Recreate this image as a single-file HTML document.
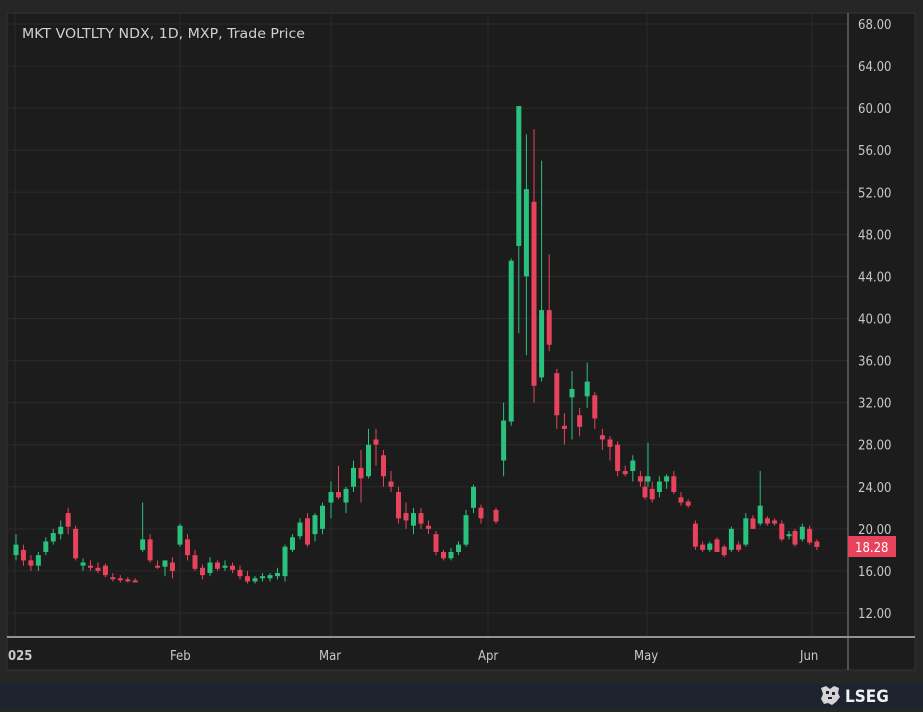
<!DOCTYPE html>
<html><head><meta charset="utf-8"><style>
html,body{margin:0;padding:0;background:#262626;width:923px;height:708px;overflow:hidden;font-family:"DejaVu Sans Condensed","Liberation Sans",sans-serif}
#foot{position:absolute;left:0;top:683px;width:923px;height:25px;background:#1e2330}
</style></head><body>
<svg id="c" width="923" height="683" style="position:absolute;left:0;top:0" xmlns="http://www.w3.org/2000/svg"></svg>
<div id="foot">
<svg width="923" height="25" xmlns="http://www.w3.org/2000/svg">
<g fill="#e8e8e8"><path d="M821 5 L826 3 L830 6 L834 3 L839 5 L838 10 L840 14 L836 19 L832 22 L828 20 L824 21 L821 16 L823 11 Z" opacity="0.9"/></g>
<g fill="#1e2330"><rect x="826" y="8" width="3" height="3"/><rect x="832" y="9" width="3" height="3"/><rect x="828" y="14" width="4" height="2"/></g>
<text x="845" y="19" font-family="DejaVu Sans Condensed,Liberation Sans,sans-serif" font-weight="bold" font-size="17" fill="#f0f0f0">LSEG</text>
</svg></div>
<script>
var s='';
function Y(p){return 613-(p-12)*10.518;}
s+='<rect x="7" y="13" width="908" height="657" fill="#1c1c1c" stroke="#333" stroke-width="1"/>';
for(var p=12;p<=68;p+=4){var y=Y(p);s+='<line x1="8" x2="848" y1="'+y+'" y2="'+y+'" stroke="#2a2a2a"/>';
s+='<text x="858" y="'+(y+5)+'" font-size="13" fill="#c8c8c8" font-family="DejaVu Sans Condensed,Liberation Sans,sans-serif">'+p.toFixed(2)+'</text>';}
[15,180,331,488,647,812].forEach(function(x){s+='<line x1="'+x+'" x2="'+x+'" y1="13" y2="637" stroke="#2a2a2a"/>';});
var months=[[16,7.45,[[17.5,19.5,17,18.5],[18,18.5,16.5,17],[17,17.5,16,16.5],[16.5,17.8,16,17.5],[17.8,19.2,17.5,18.8],[18.8,20,18.5,19.6],[19.5,20.8,19,20.2],[21.5,22,19.5,20.2],[20,20.3,17,17.2],[16.5,17.2,16,16.8],[16.5,17,16,16.3],[16.3,16.8,15.8,16],[16.5,16.7,15.4,15.6],[15.4,15.8,15,15.2],[15.3,15.6,14.9,15.2],[15.2,15.4,14.9,15.1],[15.1,15.3,14.9,15],[18,22.5,17.8,19],[19,19.5,16.8,17],[16.5,17,16.2,16.4],[16.4,17,15.5,17],[16.8,17.3,15.3,16]]],
[180,7.5,[[18.5,20.5,18.3,20.3],[19,19.5,17,17.5],[17.5,18,16,16.2],[16.3,16.6,15.2,15.6],[15.8,17.3,15.5,16.8],[16.8,17,16,16.2],[16.3,17,16,16.5],[16.5,16.8,15.8,16.1],[16.1,16.5,15.2,15.5],[15.5,16,14.8,15],[15,15.5,14.8,15.3],[15.3,15.8,15,15.5],[15.3,15.8,15,15.6],[15.5,16.3,15.2,15.8],[15.5,18.5,15,18.3],[18,19.5,17.8,19.2],[19.3,21,19,20.6],[21,21.5,18.3,18.5],[19.5,21.5,18.8,21.3],[20,22.5,19.5,22.2]]],
[331,7.5,[[22.5,24.5,21,23.5],[23.5,26,22.8,23],[22.5,24,21.5,23.8],[24,26.5,23.5,25.8],[25.8,27.5,22.5,24.8],[25,29.5,24.8,28],[28.5,29.5,26,28],[27,27.5,24,25],[24.5,25.5,23.5,24],[23.5,24,20.5,21],[21.5,22.5,20,20.8],[20.3,22,19.5,21.5],[21.5,22,20,20.5],[20.3,20.8,19.5,20],[19.5,19.8,17.5,17.8],[17.8,18,17,17.2],[17.2,18.2,17,17.8],[17.8,18.8,17.5,18.5],[18.5,21.8,18.3,21.3],[22,24.2,21.5,24],[22,22.3,20.5,21]]],
[496,7.6,[[21.8,22,20.5,20.7],[26.5,32,25,30.3],[30.2,45.7,29.8,45.5],[46.9,60.2,38.6,60.2],[44,57.5,36.5,52.3],[51.1,58,32,33.6],[34.4,55,34,40.8],[40.8,46.1,36.9,37.5],[34.8,35.2,29.5,30.8],[29.8,31,28,29.5],[32.5,35,28.5,33.3],[30.8,31.5,28.8,29.7],[32.6,35.8,31.5,34],[32.7,33,29.5,30.5],[28.9,29.5,27.5,28.5],[28.5,28.8,26.5,27.8],[28,28.3,25,25.5],[25.5,26,25,25.2],[25.5,27,24.5,26.5],[25,25.5,24,24.5],[24.5,28.2,24,25]]],
[645,7.2,[[24,25,22.8,23],[23.8,24.5,22.5,22.8],[23.5,25,23,24.5],[24.5,25.2,23.8,25],[25,25.5,23.3,23.5],[23,23.5,22.2,22.5],[22.6,22.8,22,22.2],[20.5,20.8,18,18.3],[18.5,18.8,17.8,18],[18,18.8,17.8,18.6],[19,19.2,17.8,17.8],[18.3,18.5,17.3,17.5],[18,20.2,17.8,20],[18.5,18.8,17.8,18],[18.5,21.5,18.3,21],[21,21.3,20,20],[20.5,25.5,20.3,22.2],[21,21.2,20.3,20.5],[20.8,21,20.3,20.5],[20.5,20.8,18.8,19],[19.3,19.8,19,19.5]]],
[795,7.3,[[19.8,20,18.3,18.5],[19,20.5,18.8,20.2],[20,20.3,18.5,18.7],[18.8,19,18,18.28]]]];
months.forEach(function(m){m[2].forEach(function(c,i){var x=m[0]+i*m[1];var o=c[0],h=c[1],l=c[2],cl=c[3];var col=cl>=o?'#2ac07e':'#e8435c';
var t=Y(Math.max(o,cl)),b=Y(Math.min(o,cl));if(b-t<2)b=t+2;
s+='<line x1="'+x+'" x2="'+x+'" y1="'+Y(h)+'" y2="'+Y(l)+'" stroke="'+col+'" stroke-width="1"/>';
s+='<rect x="'+(x-2.5)+'" y="'+t+'" width="5" height="'+(b-t)+'" fill="'+col+'"/>';});});
s+='<line x1="7" x2="915" y1="637" y2="637" stroke="#d8d8d8" stroke-width="1.2"/>';
s+='<line x1="848" x2="848" y1="13" y2="670" stroke="#888" stroke-width="1"/>';
s+='<rect x="848" y="536" width="48" height="21" fill="#e8435c"/><text x="855" y="552" font-size="13" fill="#fff" font-family="DejaVu Sans Condensed,Liberation Sans,sans-serif">18.28</text>';
s+='<text x="22" y="38" font-size="13.2" fill="#d0d0d0" font-family="DejaVu Sans,Liberation Sans,sans-serif" textLength="283" lengthAdjust="spacingAndGlyphs">MKT VOLTLTY NDX, 1D, MXP, Trade Price</text>';
[['025',8,'bold'],['Feb',170],['Mar',319],['Apr',478],['May',634],['Jun',800]].forEach(function(a){s+='<text x="'+a[1]+'" y="660" font-size="13" fill="#c8c8c8" font-weight="'+(a[2]||'normal')+'" font-family="DejaVu Sans Condensed,Liberation Sans,sans-serif">'+a[0]+'</text>';});
document.getElementById('c').innerHTML=s;
</script>
</body></html>
